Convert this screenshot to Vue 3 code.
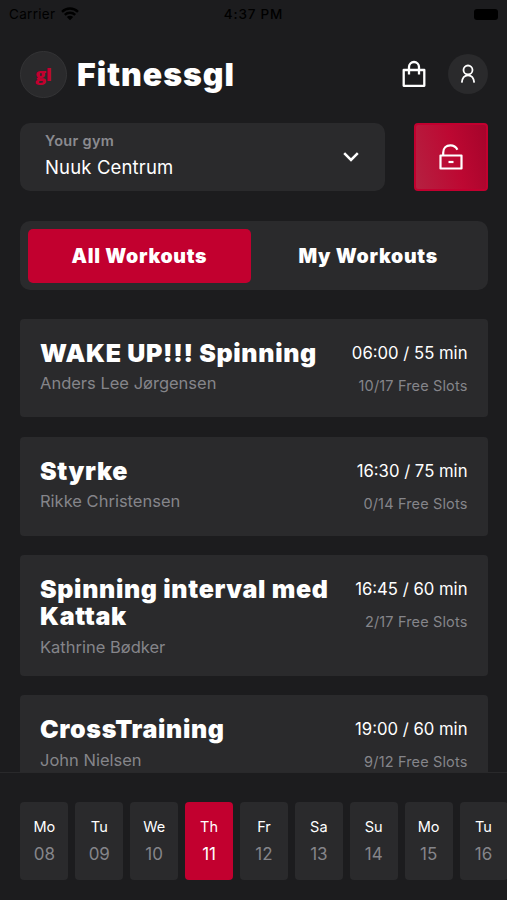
<template>
  <div class="screen">
    <div class="status-bar">
      <div class="status-left">
        <span>Carrier</span>
        <svg class="wifi" viewBox="0 0 18 14">
          <path d="M1 4.8a11.5 11.5 0 0 1 16 0M3.8 7.8a7.5 7.5 0 0 1 10.4 0" fill="none" stroke="#000" stroke-width="2.4" />
          <path d="M9 13.2 5.8 10a4.6 4.6 0 0 1 6.4 0z" fill="#000" />
        </svg>
      </div>
      <div class="status-time">4:37 PM</div>
      <div class="status-right"><div class="battery"></div></div>
    </div>

    <div class="header">
      <div class="logo">gl</div>
      <div class="brand">Fitnessgl</div>
      <svg class="bag" viewBox="0 0 24 28" fill="none" stroke="#fff" stroke-width="2.3">
        <path d="M1.7 10h20.6v15.8H1.7z" stroke-linejoin="round" />
        <path d="M7 14.4V7a5 5 0 0 1 10 0v7.4" />
      </svg>
      <div class="avatar">
        <svg viewBox="0 0 16 20" fill="none" stroke="#fff" stroke-width="1.8">
          <circle cx="8" cy="6" r="4.5" />
          <path d="M1.8 18.6c.4-4.6 2.6-7.3 6.2-7.3s5.8 2.7 6.2 7.3" />
        </svg>
      </div>
    </div>

    <div class="gym-row">
      <div class="gym">
        <div class="gym-text">
          <div class="gym-label">Your gym</div>
          <div class="gym-name">Nuuk Centrum</div>
        </div>
        <svg class="chevron" viewBox="0 0 16 10">
          <path d="M1.2 1.2 8 8l6.800-6.800" fill="none" stroke="#fff" stroke-width="2.5" />
        </svg>
      </div>
      <div class="unlock">
        <svg viewBox="0 0 24 26" fill="none" stroke="#fff" stroke-width="2.2">
          <path d="M1.5 11.5h21v13h-21z" stroke-linejoin="round" />
          <path d="M4.200 11.500V8.700c0-4.400 3-7.400 7.200-7.400 3.200 0 5.600 1.500 7 4.400" />
          <path d="M9.500 18h5" />
        </svg>
      </div>
    </div>

    <div class="tabs">
      <div
        v-for="tab in tabs"
        :key="tab"
        class="tab"
        :class="{ active: tab === currentTab }"
        @click="currentTab = tab"
      >{{ tab }}</div>
    </div>

    <div class="workouts">
      <div v-for="item in workouts" :key="item.title" class="card">
        <div class="card-main">
          <div class="card-title">{{ item.title }}</div>
          <div class="card-trainer">{{ item.trainer }}</div>
        </div>
        <div class="card-side">
          <div class="card-time">{{ item.time }} / {{ item.duration }} min</div>
          <div class="card-slots">{{ item.slots }} Free Slots</div>
        </div>
      </div>
    </div>

    <div class="days">
      <div
        v-for="day in days"
        :key="day.date"
        class="day"
        :class="{ active: day.date === currentDate }"
        @click="currentDate = day.date"
      >
        <div class="day-name">{{ day.name }}</div>
        <div class="day-date">{{ day.date }}</div>
      </div>
    </div>
  </div>
</template>

<script setup>
import { ref } from 'vue'

const tabs = ['All Workouts', 'My Workouts']
const currentTab = ref('All Workouts')

const workouts = [
  { title: 'WAKE UP!!! Spinning', trainer: 'Anders Lee Jørgensen', time: '06:00', duration: 55, slots: '10/17' },
  { title: 'Styrke', trainer: 'Rikke Christensen', time: '16:30', duration: 75, slots: '0/14' },
  { title: 'Spinning interval med Kattak', trainer: 'Kathrine Bødker', time: '16:45', duration: 60, slots: '2/17' },
  { title: 'CrossTraining', trainer: 'John Nielsen', time: '19:00', duration: 60, slots: '9/12' }
]

const days = [
  { name: 'Mo', date: '08' },
  { name: 'Tu', date: '09' },
  { name: 'We', date: '10' },
  { name: 'Th', date: '11' },
  { name: 'Fr', date: '12' },
  { name: 'Sa', date: '13' },
  { name: 'Su', date: '14' },
  { name: 'Mo', date: '15' },
  { name: 'Tu', date: '16' }
]
const currentDate = ref('11')
</script>

<style>
body {
  background: #1c1c1e;
}
</style>

<style scoped>
.screen {
  width: 507px;
  height: 900px;
  display: flex;
  flex-direction: column;
  overflow: hidden;
  background: #1c1c1e;
  color: #fff;
  font-family: Inter, sans-serif;
}

/* status bar */
.status-bar {
  flex: none;
  height: 28px;
  padding: 0 9px;
  display: grid;
  grid-template-columns: 1fr auto 1fr;
  align-items: center;
  color: #000;
  font-size: 13.5px;
}

.status-left {
  display: flex;
  align-items: center;
  gap: 6px;
  letter-spacing: 0.3px;
}

.wifi {
  width: 18px;
  height: 14px;
}

.status-time {
  font-weight: 500;
  letter-spacing: 0.8px;
}

.status-right {
  display: flex;
  justify-content: flex-end;
}

.battery {
  width: 24px;
  height: 11px;
  border-radius: 3px;
  background: #000;
}

/* header */
.header {
  flex: none;
  height: 48px;
  margin-top: 22px;
  padding: 0 19px 0 20px;
  display: flex;
  align-items: center;
}

.logo {
  box-sizing: border-box;
  width: 47px;
  height: 47px;
  border: 1px solid #343436;
  border-radius: 50%;
  background: #2a2a2c;
  display: flex;
  align-items: center;
  justify-content: center;
  color: #c2002f;
  font-family: "Open Sans", sans-serif;
  font-size: 18px;
  font-weight: 800;
}

.brand {
  flex: 1;
  margin-left: 10px;
  font-size: 32px;
  font-weight: 900;
  letter-spacing: 1px;
}

.bag {
  width: 24px;
  height: 28px;
  margin-right: 22px;
}

.avatar {
  width: 40px;
  height: 40px;
  border-radius: 50%;
  background: #2a2a2c;
  display: flex;
  align-items: center;
  justify-content: center;
}

.avatar svg {
  width: 16px;
  height: 20px;
}

/* gym selector */
.gym-row {
  flex: none;
  height: 68px;
  margin: 25px 19.5px 0 20px;
  display: flex;
  gap: 29.5px;
}

.gym {
  flex: 1;
  box-sizing: border-box;
  padding: 0 26px 0 25px;
  border-radius: 10px;
  background: #2a2a2c;
  display: flex;
  align-items: center;
  justify-content: space-between;
}

.gym-label {
  color: #8b8b90;
  font-size: 14.5px;
  font-weight: 600;
  line-height: 20px;
  letter-spacing: 0.3px;
}

.gym-name {
  margin-top: 3px;
  margin-bottom: 3px;
  font-size: 18.5px;
  line-height: 26px;
  letter-spacing: 0.15px;
}

.chevron {
  width: 16px;
  height: 10px;
}

.unlock {
  box-sizing: border-box;
  width: 73.5px;
  border: 2px solid #c2002f;
  border-radius: 4px;
  background: linear-gradient(75deg, #b52141 0%, #bd0832 55%, #a5042b 100%);
  display: flex;
  align-items: center;
  justify-content: center;
}

.unlock svg {
  width: 24px;
  height: 26px;
}

/* tabs */
.tabs {
  flex: none;
  box-sizing: border-box;
  height: 69px;
  margin: 30px 19.5px 0 20px;
  padding: 7.5px;
  border-radius: 10px;
  background: #2a2a2c;
  display: flex;
  gap: 5px;
}

.tab {
  flex: 1;
  border-radius: 5px;
  display: flex;
  align-items: center;
  justify-content: center;
  font-size: 19.5px;
  font-weight: 900;
  letter-spacing: 0.7px;
}

.tab.active {
  background: #c2002f;
}

/* workout list */
.workouts {
  flex: 1;
  min-height: 0;
  margin: 28.5px 19.5px 0 20px;
  display: flex;
  flex-direction: column;
  gap: 19.700px;
  overflow: hidden;
}

.card {
  flex: none;
  box-sizing: border-box;
  min-height: 98.700px;
  padding: 21px 20px 19px;
  border-radius: 4px;
  background: #2a2a2c;
  display: flex;
  justify-content: space-between;
}

.card-main {
  width: 300px;
}

.card-title {
  font-size: 25px;
  font-weight: 900;
  line-height: 27px;
  letter-spacing: 0.65px;
}

.card-trainer {
  margin-top: 6.500px;
  color: #85858a;
  font-size: 16.5px;
  line-height: 20px;
}

.card-side {
  flex: none;
  text-align: right;
}

.card-time {
  font-size: 16.7px;
  line-height: 27px;
}

.card-slots {
  margin-top: 9px;
  color: #85858a;
  font-size: 14.5px;
  line-height: 20px;
  letter-spacing: 0.15px;
}

/* day picker */
.days {
  flex: none;
  box-sizing: border-box;
  height: 128px;
  padding: 29px 0 0 20.400px;
  border-top: 1px solid #29292b;
  display: flex;
  gap: 6.900px;
}

.day {
  flex: none;
  box-sizing: border-box;
  width: 48px;
  height: 78px;
  padding-top: 15px;
  border-radius: 4px;
  background: #2a2a2c;
  text-align: center;
}

.day-name {
  font-size: 14.5px;
  line-height: 20px;
}

.day-date {
  margin-top: 5px;
  color: #85858a;
  font-size: 17px;
  line-height: 24px;
}

.day.active {
  background: #c2002f;
}

.day.active .day-date {
  color: #fff;
}
</style>
